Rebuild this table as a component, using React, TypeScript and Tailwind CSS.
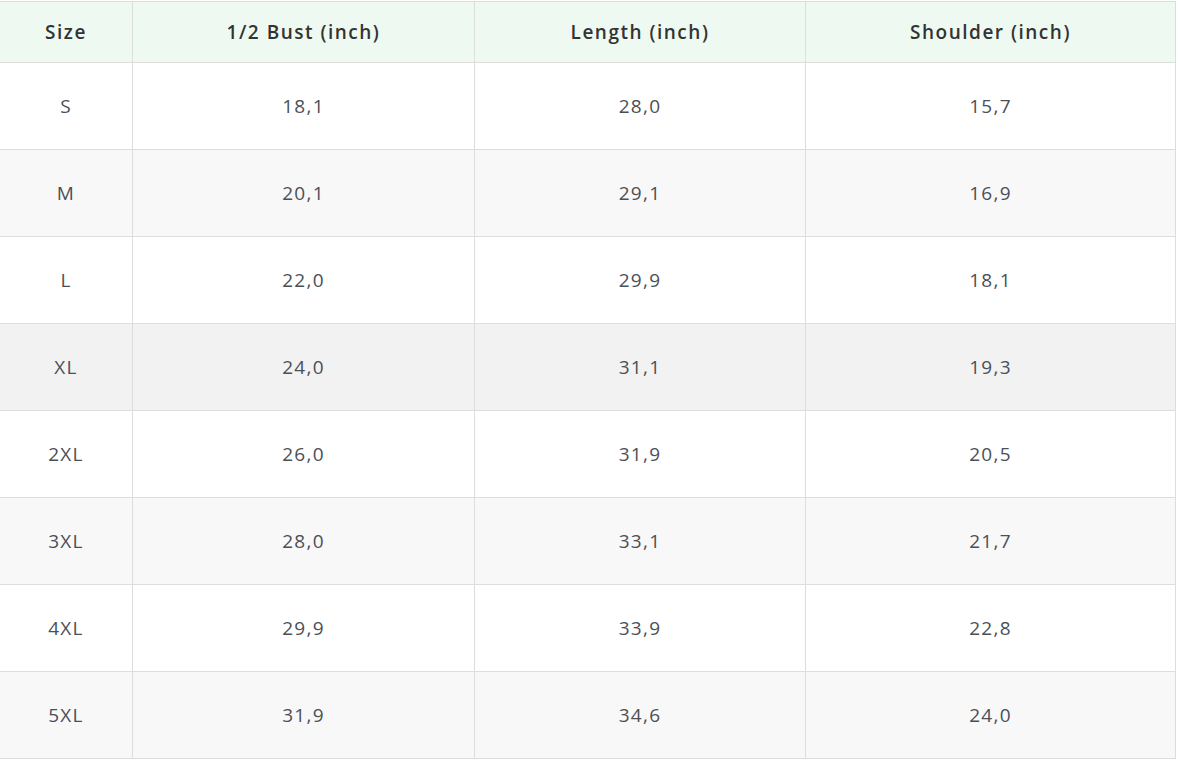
import React from "react";

const headers = ["Size", "1/2 Bust (inch)", "Length (inch)", "Shoulder (inch)"];
const rows: string[][] = [
  ["S", "18,1", "28,0", "15,7"],
  ["M", "20,1", "29,1", "16,9"],
  ["L", "22,0", "29,9", "18,1"],
  ["XL", "24,0", "31,1", "19,3"],
  ["2XL", "26,0", "31,9", "20,5"],
  ["3XL", "28,0", "33,1", "21,7"],
  ["4XL", "29,9", "33,9", "22,8"],
  ["5XL", "31,9", "34,6", "24,0"],
];

const rowBg = [
  "bg-white",
  "bg-[#f8f8f8]",
  "bg-white",
  "bg-[#f2f2f2]",
  "bg-white",
  "bg-[#f8f8f8]",
  "bg-white",
  "bg-[#f8f8f8]",
];

export default function App() {
  return (
    <div className="pt-px bg-white min-h-screen" style={{ fontFamily: '"Open Sans", "Liberation Sans", sans-serif' }}>
      <div className="w-[1176px] border-t border-[#dddddd]">
        <div className="grid grid-cols-[133px_342px_331px_370px] bg-[#eefaf1]">
          {headers.map((h) => (
            <div
              key={h}
              className="h-[61px] flex items-center justify-center border-r border-b border-[#dddddd] text-[19px] font-semibold text-[#333333] tracking-[1.5px]"
            >
              {h}
            </div>
          ))}
        </div>
        {rows.map((r, i) => (
          <div key={r[0]} className={`grid grid-cols-[133px_342px_331px_370px] ${rowBg[i]}`}>
            {r.map((c, j) => (
              <div
                key={j}
                className="h-[87px] flex items-center justify-center border-r border-b border-[#dddddd] text-[19px] text-[#4b4f58] tracking-[1.3px]"
              >
                {c}
              </div>
            ))}
          </div>
        ))}
      </div>
    </div>
  );
}
